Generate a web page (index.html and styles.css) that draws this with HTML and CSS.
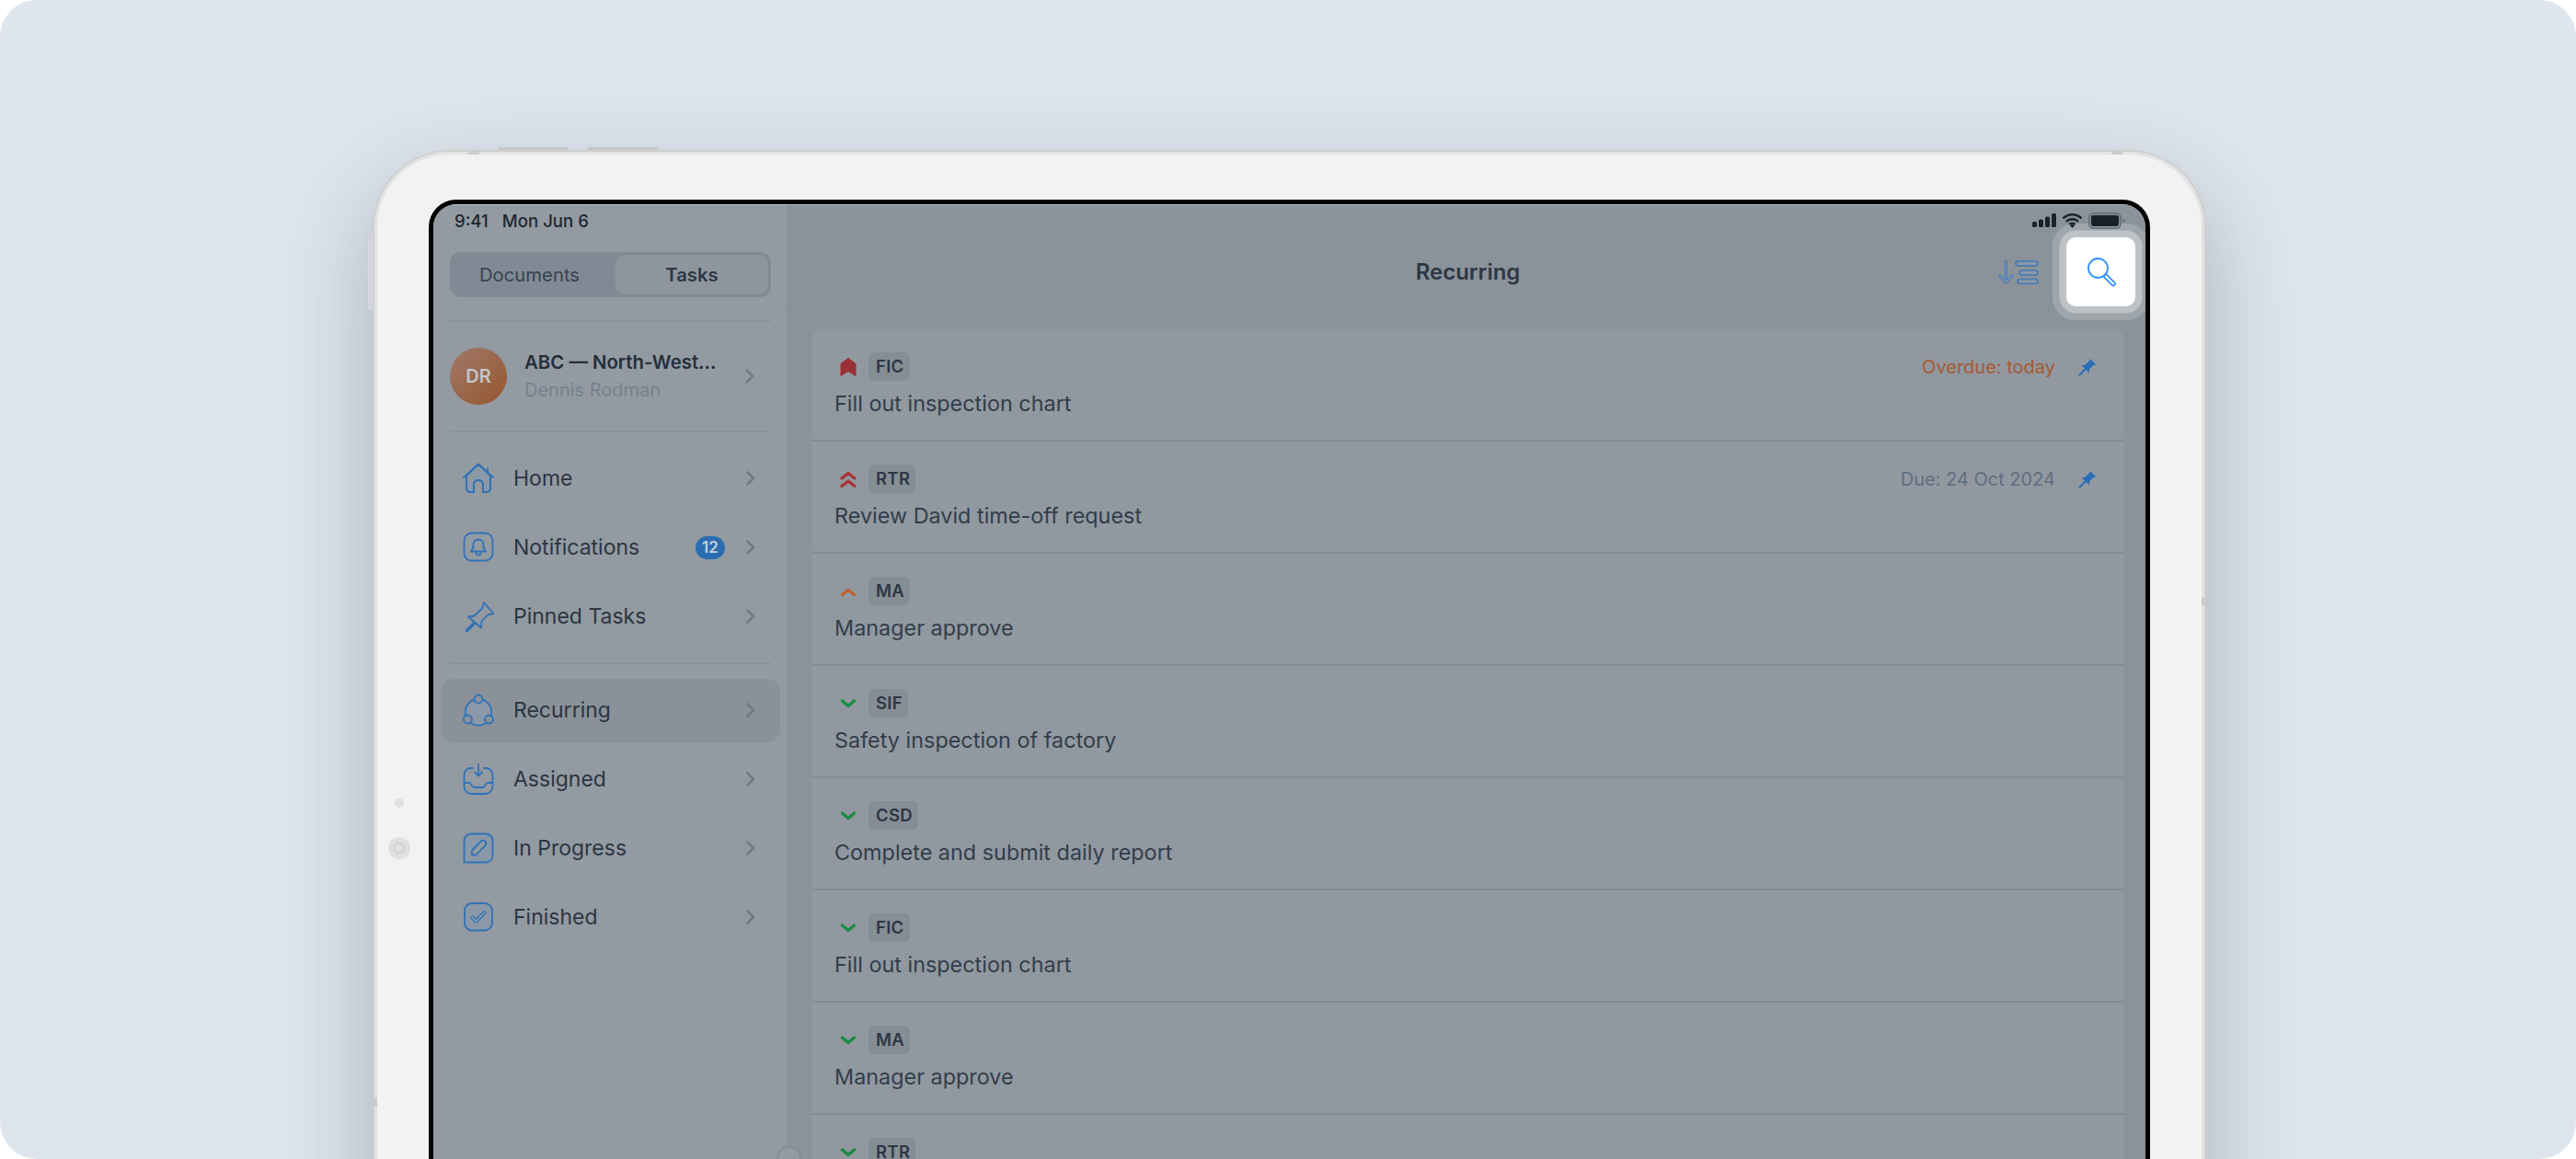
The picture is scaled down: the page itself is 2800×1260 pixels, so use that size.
FILE: index.html
```html
<!DOCTYPE html>
<html lang="en">
<head>
    <meta charset="UTF-8">
    <title>Recurring</title>
    <link rel="stylesheet" href="styles.css">
</head>
<body>
    <svg class="icon-defs" width="0" height="0">
        <symbol id="chevron" viewBox="0 0 12 18"><path d="M2.5 2.5 9 9l-6.5 6.5" fill="none" stroke="currentColor" stroke-width="2.5" stroke-linecap="round" stroke-linejoin="round"/></symbol>
        <symbol id="prio-highest" viewBox="0 0 24 24"><path d="M15 2.5 23 8.5V21.5L15 16.5 7 21.5V8.5Z" fill="#983036" stroke="#983036" stroke-linejoin="round"/></symbol>
        <symbol id="prio-high" viewBox="0 0 24 24"><path d="M8 11 15 5.5l7 5.5M8 19.500l7-5.500 7 5.500" fill="none" stroke="#a83236" stroke-width="3.200" stroke-linecap="round" stroke-linejoin="round"/></symbol>
        <symbol id="prio-medium" viewBox="0 0 24 24"><path d="M8.500 15.500 15 10.500l6.500 5" fill="none" stroke="#bd622f" stroke-width="3.400" stroke-linecap="round" stroke-linejoin="round"/></symbol>
        <symbol id="prio-low" viewBox="0 0 24 24"><path d="M8.500 9 15 14.500 21.500 9" fill="none" stroke="#1a8c42" stroke-width="3.400" stroke-linecap="round" stroke-linejoin="round"/></symbol>
        <symbol id="pin-solid" viewBox="0 0 20 20"><path d="M13 1 19.5 7.5 16.5 8 12 12.5V16.5L3.5 8.2 7 8 12 3.5Z" fill="#2a6cb5"/><path d="M1.5 18.5 7 13" stroke="#2a6cb5" stroke-width="2" stroke-linecap="round"/></symbol>
    </svg>

    <div class="stage">
        <div class="device">
            <span class="top-btn top-btn-a"></span>
            <span class="top-btn top-btn-b"></span>
            <span class="side-btn"></span>
            <span class="band band-top-l"></span>
            <span class="band band-top-r"></span>
            <span class="band band-left"></span>
            <span class="band band-right"></span>
            <span class="cam-dot"></span>
            <span class="cam"></span>

            <div class="screen">
                <div class="status-bar">
                    <div class="status-time"><span>9:41</span><span>Mon Jun 6</span></div>
                    <div class="status-icons">
                        <svg width="26" height="16" viewBox="0 0 26 16"><g fill="#1b222a"><rect x="0" y="9" width="5" height="6" rx="1.5"/><rect x="7" y="6.5" width="5" height="8.5" rx="1.5"/><rect x="14" y="3.5" width="5" height="11.5" rx="1.5"/><rect x="21" y="0" width="5" height="15" rx="1.5"/></g></svg>
                        <svg width="23" height="16" viewBox="0 0 23 16"><path d="M1.5 5.5a14 14 0 0 1 20 0M5 9a9 9 0 0 1 13 0M8.3 12a4.5 4.5 0 0 1 6.4 0" fill="none" stroke="#1b222a" stroke-width="2.4"/><path d="M11.5 16l-2.4-2.8a3.2 3.2 0 0 1 4.8 0Z" fill="#1b222a"/></svg>
                        <svg width="40" height="18" viewBox="0 0 40 18"><rect x="1" y="1" width="34" height="16" rx="4.5" fill="none" stroke="#5f6872" stroke-width="1.5"/><rect x="3" y="3" width="30" height="12" rx="2.5" fill="#1a2028"/><path d="M37.5 6.5c1.2.4 2 1.4 2 2.500s-.8 2.100-2 2.500Z" fill="#5f6872"/></svg>
                    </div>
                </div>

                <div class="panes">
                    <aside class="sidebar">
                        <div class="segment">
                            <div class="segment-item">Documents</div>
                            <div class="segment-item active">Tasks</div>
                        </div>

                        <div class="account">
                            <div class="avatar">DR</div>
                            <div class="account-text">
                                <div class="account-name">ABC — North-West...</div>
                                <div class="account-user">Dennis Rodman</div>
                            </div>
                            <svg class="chev"><use href="#chevron"/></svg>
                        </div>

                        <nav class="nav nav-top">
                            <a class="nav-item">
                                <svg class="nav-icon" viewBox="0 0 36 36"><path d="M5 15V29a4 4 0 0 0 4 4h4V25a5 5 0 0 1 10 0v8h4a4 4 0 0 0 4-4V15L18 3Z" fill="#8a98a8"/><path d="M2 17 18 2.500 34 17M5 15V29a4 4 0 0 0 4 4h4V25a5 5 0 0 1 10 0v8h4a4 4 0 0 0 4-4V15M28 7v4"/></svg>
                                <span class="nav-label">Home</span>
                                <svg class="chev"><use href="#chevron"/></svg>
                            </a>
                            <a class="nav-item">
                                <svg class="nav-icon" viewBox="0 0 36 36"><rect x="2.500" y="2.500" width="31" height="30" rx="8"/><path d="M18 9.500c-3.500 0-5.500 2.500-5.500 5.500v3l-2.500 4.500h16L23.500 18v-3c0-3-2-5.500-5.500-5.500ZM15.500 24a2.500 2.500 0 0 0 5 0"/></svg>
                                <span class="nav-label">Notifications</span>
                                <span class="badge">12</span>
                                <svg class="chev"><use href="#chevron"/></svg>
                            </a>
                            <a class="nav-item">
                                <svg class="nav-icon" viewBox="0 0 36 36"><path d="M24 3 34.500 15 28 16.500 21.500 23.500 21 30.500 7 18.500 13.500 17.500 22 9.500Z"/><path d="M5.500 33.500 13 26" stroke-width="3.500"/></svg>
                                <span class="nav-label">Pinned Tasks</span>
                                <svg class="chev"><use href="#chevron"/></svg>
                            </a>
                        </nav>

                        <nav class="nav">
                            <a class="nav-item selected">
                                <svg class="nav-icon" viewBox="0 0 36 36"><circle cx="18" cy="20.300" r="14.300" fill="#8a98a8"/><circle class="dot" cx="18" cy="6" r="4.500"/><circle class="dot" cx="6.500" cy="28" r="4.500"/><circle class="dot" cx="29.500" cy="28" r="4.500"/></svg>
                                <span class="nav-label">Recurring</span>
                                <svg class="chev"><use href="#chevron"/></svg>
                            </a>
                            <a class="nav-item">
                                <svg class="nav-icon" viewBox="0 0 36 36"><path d="M12 6H10a7.500 7.500 0 0 0-7.500 7.500V26a8 8 0 0 0 8 8h15a8 8 0 0 0 8-8V13.500A7.500 7.500 0 0 0 26 6h-2M2.500 22H8c2.500 0 2.500 5 5.500 5h9c3 0 3-5 5.500-5h5.500M18 2V14.500M14 10.500l4 4 4-4"/></svg>
                                <span class="nav-label">Assigned</span>
                                <svg class="chev"><use href="#chevron"/></svg>
                            </a>
                            <a class="nav-item">
                                <svg class="nav-icon" viewBox="0 0 36 36"><path d="M10 2.500H26a7.500 7.500 0 0 1 7.500 7.500V26a7.500 7.500 0 0 1-7.500 7.500H2.500V10A7.500 7.500 0 0 1 10 2.500Z" fill="#8a98a8"/><path d="M11 25.500V20.500L21 10.500a3.200 3.200 0 0 1 4.500 4.500L15.500 25.500Z" fill="#939aa2"/></svg>
                                <span class="nav-label">In Progress</span>
                                <svg class="chev"><use href="#chevron"/></svg>
                            </a>
                            <a class="nav-item">
                                <svg class="nav-icon" viewBox="0 0 36 36"><rect x="3" y="3" width="30" height="29.500" rx="8" fill="#8a98a8"/><path d="M11.500 18.500 15.500 22.500 24.500 13" stroke-width="4"/><path class="check-in" d="M11.500 18.500 15.500 22.500 24.500 13"/></svg>
                                <span class="nav-label">Finished</span>
                                <svg class="chev"><use href="#chevron"/></svg>
                            </a>
                        </nav>
                    </aside>

                    <main class="main">
                        <header class="main-header">
                            <div></div>
                            <h1>Recurring</h1>
                            <div class="header-actions">
                                <svg class="sort-icon" width="44" height="26" viewBox="0 0 44 26">
                                    <path d="M8.500 1.500V23M2 16.500l6.500 7.500 6.500-7.500" fill="none" stroke="#3f78b8" stroke-width="3" stroke-linecap="round" stroke-linejoin="round"/>
                                    <path d="M8.500 1.500V23M2 16.500l6.500 7.500 6.500-7.500" fill="none" stroke="#7f97b4" stroke-width="1.200" stroke-linecap="round" stroke-linejoin="round"/>
                                    <g fill="#8a98a8" stroke="#3f78b8" stroke-width="1.500"><rect x="19" y="1" width="24" height="5" rx="2.500"/><rect x="23" y="11" width="20" height="5" rx="2.500"/><rect x="21" y="20.500" width="22" height="5" rx="2.500"/></g>
                                </svg>
                                <button class="search-btn">
                                    <svg width="36" height="36" viewBox="0 0 36 36">
                                        <circle cx="14.500" cy="13.500" r="10.500" fill="none" stroke="#2d8eff" stroke-width="1.800"/>
                                        <path d="M23 22.500 31 30.500" stroke="#2d8eff" stroke-width="5.500" stroke-linecap="round"/>
                                        <path d="M23 22.500 31 30.500" stroke="#fff" stroke-width="2.200" stroke-linecap="round"/>
                                    </svg>
                                </button>
                            </div>
                        </header>

                        <div class="task-list">
                            <div class="task">
                                <div class="task-top">
                                    <svg class="prio"><use href="#prio-highest"/></svg>
                                    <span class="tag">FIC</span>
                                    <span class="due overdue">Overdue: today</span>
                                    <svg class="pin"><use href="#pin-solid"/></svg>
                                </div>
                                <div class="task-title">Fill out inspection chart</div>
                            </div>
                            <div class="task">
                                <div class="task-top">
                                    <svg class="prio"><use href="#prio-high"/></svg>
                                    <span class="tag">RTR</span>
                                    <span class="due">Due: 24 Oct 2024</span>
                                    <svg class="pin"><use href="#pin-solid"/></svg>
                                </div>
                                <div class="task-title">Review David time-off request</div>
                            </div>
                            <div class="task">
                                <div class="task-top">
                                    <svg class="prio"><use href="#prio-medium"/></svg>
                                    <span class="tag">MA</span>
                                </div>
                                <div class="task-title">Manager approve</div>
                            </div>
                            <div class="task">
                                <div class="task-top">
                                    <svg class="prio"><use href="#prio-low"/></svg>
                                    <span class="tag">SIF</span>
                                </div>
                                <div class="task-title">Safety inspection of factory</div>
                            </div>
                            <div class="task">
                                <div class="task-top">
                                    <svg class="prio"><use href="#prio-low"/></svg>
                                    <span class="tag">CSD</span>
                                </div>
                                <div class="task-title">Complete and submit daily report</div>
                            </div>
                            <div class="task">
                                <div class="task-top">
                                    <svg class="prio"><use href="#prio-low"/></svg>
                                    <span class="tag">FIC</span>
                                </div>
                                <div class="task-title">Fill out inspection chart</div>
                            </div>
                            <div class="task">
                                <div class="task-top">
                                    <svg class="prio"><use href="#prio-low"/></svg>
                                    <span class="tag">MA</span>
                                </div>
                                <div class="task-title">Manager approve</div>
                            </div>
                            <div class="task">
                                <div class="task-top">
                                    <svg class="prio"><use href="#prio-low"/></svg>
                                    <span class="tag">RTR</span>
                                </div>
                                <div class="task-title">Review David time-off request</div>
                            </div>
                        </div>
                    </main>
                </div>

                <span class="pane-handle"></span>
            </div>
        </div>
    </div>
</body>
</html>
```

FILE: styles.css
```css
/* General styling */
html, body {
    margin: 0;
    padding: 0;
    background: #fff;
}

body {
    font-family: Inter, "Noto Sans", sans-serif;
    color: #2d3744;
}

.icon-defs {
    position: absolute;
}

.stage {
    width: 2800px;
    height: 1260px;
    box-sizing: border-box;
    padding: 163px 0 0 405px;
    background: #dee5ed;
    border-radius: 40px;
    overflow: hidden;
}

/* Device frame */
.device {
    position: relative;
    width: 1993px;
    height: 1400px;
    box-sizing: border-box;
    padding: 52px 59px 0;
    background: #f2f2f2;
    border: 2px solid #cfcfcf;
    border-radius: 84px;
    box-shadow: inset 0 0 0 3px #e3e3e3, 0 40px 100px rgba(50, 50, 60, 0.3);
}

.top-btn {
    position: absolute;
    top: -5px;
    width: 75px;
    height: 3px;
    background: #c6c6c6;
}

.top-btn-a { left: 135px; }
.top-btn-b { left: 232px; }

.side-btn {
    position: absolute;
    left: -7px;
    top: 88px;
    width: 5px;
    height: 84px;
    background: #d2d5db;
}

.band {
    position: absolute;
    background: #cbcbcb;
}

.band-top-l { left: 102px; top: -2px; width: 12px; height: 5px; }
.band-top-r { left: 1888px; top: -2px; width: 12px; height: 5px; }
.band-left { left: -2px; top: 1028px; width: 5px; height: 10px; }
.band-right { right: -2px; top: 485px; width: 5px; height: 8px; }

.cam-dot {
    position: absolute;
    left: 22px;
    top: 703px;
    width: 10px;
    height: 10px;
    border-radius: 50%;
    background: #dfdfdf;
}

.cam {
    position: absolute;
    left: 15px;
    top: 745px;
    width: 24px;
    height: 24px;
    border-radius: 50%;
    background: #dfdfdf;
}

.cam::after {
    content: "";
    position: absolute;
    left: 6px;
    top: 6px;
    width: 10px;
    height: 10px;
    border: 1px solid #c6c6c6;
    border-radius: 50%;
}

/* Screen */
.screen {
    position: relative;
    height: 1300px;
    border: 5px solid #000;
    border-radius: 30px;
    overflow: hidden;
    background: #939aa2;
}

.status-bar {
    position: absolute;
    left: 23px;
    right: 22px;
    top: 0;
    height: 36px;
    z-index: 3;
    display: flex;
    justify-content: space-between;
    align-items: center;
}

.status-time {
    display: flex;
    gap: 15px;
    font-size: 18.6px;
    font-weight: 500;
    color: #1f2630;
}

.status-icons {
    display: flex;
    align-items: center;
    gap: 6px;
}

.panes {
    display: flex;
    height: 100%;
    border-top: 1px solid #b9bdc1;
}

.pane-handle {
    position: absolute;
    left: 373px;
    top: 1024px;
    width: 27px;
    height: 27px;
    box-sizing: border-box;
    border: 2px solid #858d96;
    border-radius: 50%;
    background: #939aa2;
}

/* Sidebar */
.sidebar {
    width: 385px;
    flex-shrink: 0;
    box-sizing: border-box;
    padding: 51px 17px 0 18px;
    background: #939aa2;
    border-right: 1px solid #858d96;
}

.segment {
    display: flex;
    height: 49px;
    box-sizing: border-box;
    padding: 3px;
    background: #808a95;
    border-radius: 12px;
}

.segment-item {
    display: flex;
    align-items: center;
    justify-content: center;
    font-size: 20.3px;
    color: #38424f;
}

.segment-item:first-child {
    flex: 1;
    padding-right: 10px;
}

.segment-item.active {
    width: 166px;
    font-weight: 600;
    background: #8f959d;
    border-radius: 10px;
    color: #2d3744;
}

.account {
    display: flex;
    align-items: center;
    height: 118px;
    margin-top: 25px;
    padding-right: 17px;
    border-top: 2px solid #8b929a;
    border-bottom: 2px solid #8b929a;
}

.avatar {
    width: 62px;
    height: 62px;
    border-radius: 50%;
    flex-shrink: 0;
    display: flex;
    align-items: center;
    justify-content: center;
    font-size: 20px;
    font-weight: 600;
    color: #c3c6c9;
    background: linear-gradient(135deg, #a0796a, #96562f);
}

.account-text {
    flex: 1;
    margin-left: 19px;
}

.account-name {
    font-size: 20.4px;
    font-weight: 600;
    line-height: 30px;
    color: #252e3a;
}

.account-user {
    font-size: 20px;
    line-height: 30px;
    color: #76818f;
}

.chev {
    width: 12px;
    height: 18px;
    flex-shrink: 0;
    color: #6f7a86;
}

.nav {
    display: flex;
    flex-direction: column;
    gap: 6px;
    padding: 15.5px 0;
}

.nav-top {
    border-bottom: 2px solid #8b929a;
}

.nav-item {
    display: flex;
    align-items: center;
    height: 69px;
    margin: 0 -10px;
    padding: 0 26px 0 23px;
    box-sizing: border-box;
    border-radius: 14px;
    font-size: 23px;
    color: #2b3542;
}

.nav-item.selected {
    background: #8a9198;
}

.nav-label {
    margin-left: 20px;
}

.nav-icon {
    width: 36px;
    height: 36px;
    flex-shrink: 0;
    fill: none;
    stroke: #2f72b8;
    stroke-width: 1.8;
    stroke-linecap: round;
    stroke-linejoin: round;
}

.nav-icon .dot {
    fill: #8a9198;
}

.nav-icon .check-in {
    stroke: #8a98a8;
    stroke-width: 1.800;
}

.badge {
    margin-left: auto;
    margin-right: 22px;
    width: 32px;
    height: 25px;
    border-radius: 13px;
    background: #2a6cb0;
    color: #c5d0dc;
    font-size: 17px;
    font-weight: 600;
    line-height: 25px;
    text-align: center;
}

.nav-item > .chev {
    margin-left: auto;
}

.badge + .chev {
    margin-left: 0;
}

/* Main pane */
.main {
    flex: 1;
    display: flex;
    flex-direction: column;
    background: #8b9299;
}

.main-header {
    position: relative;
    z-index: 2;
    height: 110px;
    box-sizing: border-box;
    padding: 35px 11px 0;
    display: grid;
    grid-template-columns: 1fr auto 1fr;
    align-items: start;
    border-bottom: 1px solid #858c94;
}

.main-header h1 {
    margin: 0 0 0 3px;
    font-size: 24px;
    font-weight: 600;
    line-height: 75px;
    color: #2d3744;
}

.header-actions {
    display: flex;
    align-items: center;
    justify-content: flex-end;
    gap: 30px;
}

.search-btn {
    width: 75px;
    height: 75px;
    padding: 0;
    border: none;
    border-radius: 10px;
    background: #fff;
    display: flex;
    align-items: center;
    justify-content: center;
    box-shadow: 0 0 0 7.500px #bcc2c6, 0 0 0 15px #9ea5ab;
}

.task-list {
    margin: 25px 23px 0 26px;
    background: #9198a0;
    border-radius: 12px 12px 0 0;
}

.task {
    height: 122px;
    box-sizing: border-box;
    padding: 25px 30px 0 25px;
    border-bottom: 2px solid #858c94;
}

.task-top {
    display: flex;
    align-items: center;
    height: 31px;
}

.prio {
    width: 24px;
    height: 24px;
    margin-right: 13px;
}

.tag {
    height: 31px;
    padding: 0 6px 0 8px;
    box-sizing: border-box;
    border-radius: 6px;
    background: #868d95;
    font-size: 18.5px;
    font-weight: 600;
    line-height: 31px;
    letter-spacing: 0.3px;
    color: #2c3745;
}

.due {
    margin-left: auto;
    font-size: 20px;
    color: #5f6f82;
}

.due.overdue {
    color: #a85a32;
}

.pin {
    width: 20px;
    height: 20px;
    margin-left: 25px;
}

.task-title {
    margin-top: 10px;
    font-size: 23.4px;
    line-height: 30px;
    color: #323d4b;
}
```
